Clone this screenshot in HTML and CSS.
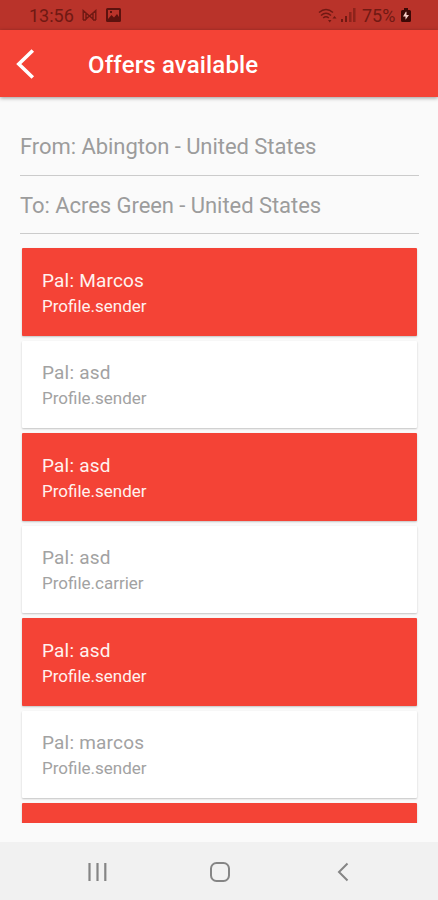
FILE: index.html
```html
<!DOCTYPE html>
<html lang="en">
<head>
<meta charset="utf-8">
<title>Offers available</title>
<link rel="stylesheet" href="styles.css">
</head>
<body>
<div class="status">
  <span class="time">13:56</span>
  <svg class="mail" width="15" height="12" viewBox="0 0 15 12" fill="none" stroke="currentColor" stroke-width="1.4"><path d="M1.200 11V1.500L7.500 7l6.300-5.500V11M4 11V4M11 11V4M4 10l3.500-3L11 10M1 11h3M11 11h3"/></svg>
  <svg class="photo" width="15" height="14" viewBox="0 0 15 14"><path fill="currentColor" fill-rule="evenodd" d="M1.500 0h12A1.500 1.500 0 0 1 15 1.500v11a1.500 1.500 0 0 1-1.500 1.500h-12A1.500 1.500 0 0 1 0 12.500v-11A1.500 1.500 0 0 1 1.500 0zM2 2v9l3.500-4 2.500 2.500L11 6l2 3V2zM4 3h2v2H4z"/></svg>
  <svg class="wifi" width="19" height="15" viewBox="0 0 19 15" fill="none" stroke="currentColor" stroke-width="1.500"><path d="M1 4.500Q8 -1.500 15 4.500M3 7.500Q8 3 13 7.500M5.200 10Q8 7.500 10.800 10"/><path fill="currentColor" stroke="none" d="M10 12h3.500l-1.750 2.500zM14.500 10.500h4l-2-2.500z"/></svg>
  <svg class="signal" width="15" height="14" viewBox="0 0 15 14" fill="currentColor"><path d="M0 11h2v3H0zM4 8h2v6H4z"/><path opacity=".6" d="M8 4h2.500v10H8zM12 0h2.500v14H12z"/></svg>
  <span class="percent">75%</span>
  <svg class="battery" width="10" height="14" viewBox="0 0 10 14"><path fill="currentColor" d="M3 0h4v2h1.500Q10 2 10 3.500v9Q10 14 8.500 14h-7Q0 14 0 12.500v-9Q0 2 1.500 2H3z"/><path fill="#f5cdc8" d="M4.800 3.800 2 8.500h2.500v3.200L8 7H5.500V3.800z"/></svg>
</div>
<header class="appbar">
  <svg class="back" width="20" height="32" viewBox="0 0 20 32" fill="none" stroke="#fff" stroke-width="3.600"><path d="M17.800 2.500 3.800 16l14 13.500"/></svg>
  <h1 class="title">Offers available</h1>
</header>
<main class="content">
  <div class="field from"><span>From: Abington - United States</span></div>
  <div class="field to"><span>To: Acres Green - United States</span></div>
  <div class="list">
    <article class="card red"><p class="name">Pal: Marcos</p><p class="role">Profile.sender</p></article>
    <article class="card"><p class="name">Pal: asd</p><p class="role">Profile.sender</p></article>
    <article class="card red"><p class="name">Pal: asd</p><p class="role">Profile.sender</p></article>
    <article class="card"><p class="name">Pal: asd</p><p class="role">Profile.carrier</p></article>
    <article class="card red"><p class="name">Pal: asd</p><p class="role">Profile.sender</p></article>
    <article class="card"><p class="name">Pal: marcos</p><p class="role">Profile.sender</p></article>
    <article class="card red"></article>
  </div>
</main>
<nav class="navbar">
  <svg width="20" height="20" viewBox="0 0 20 20" fill="none" stroke="currentColor" stroke-width="2.200"><path d="M2.500 1v18M10.500 1v18M18.300 1v18"/></svg>
  <svg class="home" width="20" height="20" viewBox="0 0 20 20" fill="none" stroke="currentColor" stroke-width="2"><rect x="1" y="1" width="18" height="18" rx="5.500"/></svg>
  <svg width="12" height="20" viewBox="0 0 12 20" fill="none" stroke="currentColor" stroke-width="2"><path d="M10.500 1.500 2 10l8.500 8.500"/></svg>
</nav>
</body>
</html>
```
FILE: styles.css
```css
* { box-sizing: border-box; }
body {
  margin: 0;
  width: 438px;
  height: 900px;
  display: flex;
  flex-direction: column;
  overflow: hidden;
  background: #fafafa;
  font-family: Roboto, "Liberation Sans", sans-serif;
}
.status {
  flex: none;
  height: 30px;
  display: flex;
  align-items: center;
  padding-left: 29px;
  background: #b9332a;
  color: #701913;
  font-size: 18px;
}
.time { width: 53px; }
.photo { margin-left: 9px; color: #5c120e; }
.wifi { margin-left: 197px; }
.signal { margin-left: 4px; }
.percent { margin-left: 6px; width: 39px; }
.battery { color: #3c0906; }
.appbar {
  flex: none;
  height: 67px;
  display: flex;
  align-items: center;
  padding: 0 0 0 15px;
  background: #f44336;
  box-shadow: 0 1px 4px rgba(0, 0, 0, .4);
}
.title {
  margin: 2px 0 0 53px;
  color: #fff;
  font-size: 24px;
  font-weight: 500;
  letter-spacing: 0.150px;
}
.content { flex: 1; min-height: 0; padding: 21px 19px 0 20px; }
.field {
  height: 58px;
  padding-top: 16px;
  border-bottom: 1.500px solid #cbcbcb;
  color: #9c9c9c;
  font-size: 22px;
  line-height: 28px;
  letter-spacing: -0.050px;
}
.from { padding-top: 15px; }
.list {
  height: 589px;
  margin: 0 -4px;
  padding: 14.200px 6.400px 0;
  overflow: hidden;
}
.card {
  height: 87.500px;
  margin-bottom: 5px;
  padding: 19.400px 19.600px 0;
  border-radius: 1px;
  background: #fff;
  color: #a2a2a2;
  box-shadow: 0 1px 2px rgba(0, 0, 0, .22);
}
.red { background: #f44336; color: #fff2ef; }
.name, .role { margin: 0; }
.name { font-size: 19px; line-height: 26px; letter-spacing: 0.200px; }
.role { font-size: 17px; line-height: 24px; }
.navbar {
  flex: none;
  height: 58px;
  display: flex;
  align-items: center;
  justify-content: space-between;
  padding: 2px 89px 0 87px;
  background: #f1f1f1;
  color: #858585;
}
.home { margin-right: 4px; }
```
